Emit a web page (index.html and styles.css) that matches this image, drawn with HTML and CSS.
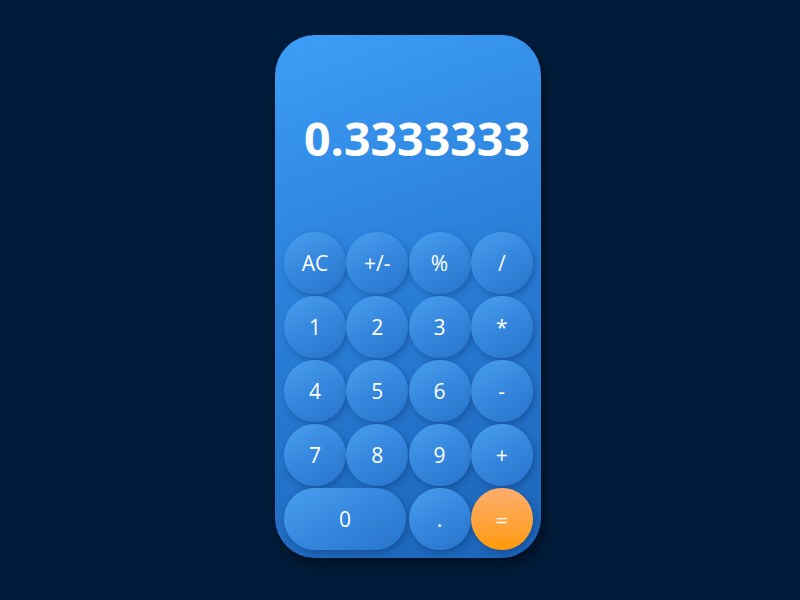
FILE: index.html
```html
<!DOCTYPE html>
<html>
<head>
<meta charset="utf-8">
<link rel="stylesheet" href="styles.css">
</head>
<body>
<div class="calc">
  <div class="display">0.3333333</div>
  <div class="keys">
    <button class="key">AC</button>
    <button class="key">+/-</button>
    <button class="key">%</button>
    <button class="key">/</button>
    <button class="key">1</button>
    <button class="key">2</button>
    <button class="key">3</button>
    <button class="key">*</button>
    <button class="key">4</button>
    <button class="key">5</button>
    <button class="key">6</button>
    <button class="key">-</button>
    <button class="key">7</button>
    <button class="key">8</button>
    <button class="key">9</button>
    <button class="key">+</button>
    <button class="key zero">0</button>
    <button class="key">.</button>
    <button class="key equals">=</button>
  </div>
</div>
</body>
</html>
```
FILE: styles.css
```css
html, body {
  margin: 0;
  height: 100%;
}
body {
  background: #001d3c;
  font-family: "Open Sans", "Segoe UI", sans-serif;
  display: flex;
  justify-content: center;
  padding-top: 35px;
  box-sizing: border-box;
}
.calc {
  width: 266px;
  height: 523px;
  margin-left: 16px;
  border-radius: 40px;
  background: linear-gradient(160deg, #3c9ef8 0%, #2a7fd9 45%, #1c64b8 100%);
  box-shadow: 4px 8px 16px rgba(0, 0, 0, 0.45);
  display: flex;
  flex-direction: column;
  box-sizing: border-box;
  padding: 0 8px 8px 9px;
}
.display {
  flex: 1;
  display: flex;
  align-items: center;
  justify-content: flex-end;
  padding: 8px 3px 0 0;
  color: #fff;
  font-weight: 700;
  font-size: 46.5px;
}
.keys {
  display: grid;
  grid-template-columns: repeat(4, 62.25px);
  grid-auto-rows: 62px;
  row-gap: 2px;
}
.key {
  border: none;
  border-radius: 31px;
  width: 62px;
  height: 62px;
  padding: 0;
  color: #fff;
  font-family: inherit;
  font-size: 21px;
  background: linear-gradient(150deg, #4a9ff0 0%, #3587dd 50%, #2874cb 100%);
  box-shadow: 2px 3px 6px rgba(0, 30, 80, 0.3);
}
.zero {
  grid-column: span 2;
  width: 122px;
}
.equals {
  font-size: 22px;
  background: linear-gradient(180deg, #fdae6e 0%, #ffa43c 55%, #ff9a0a 100%);
}
```
